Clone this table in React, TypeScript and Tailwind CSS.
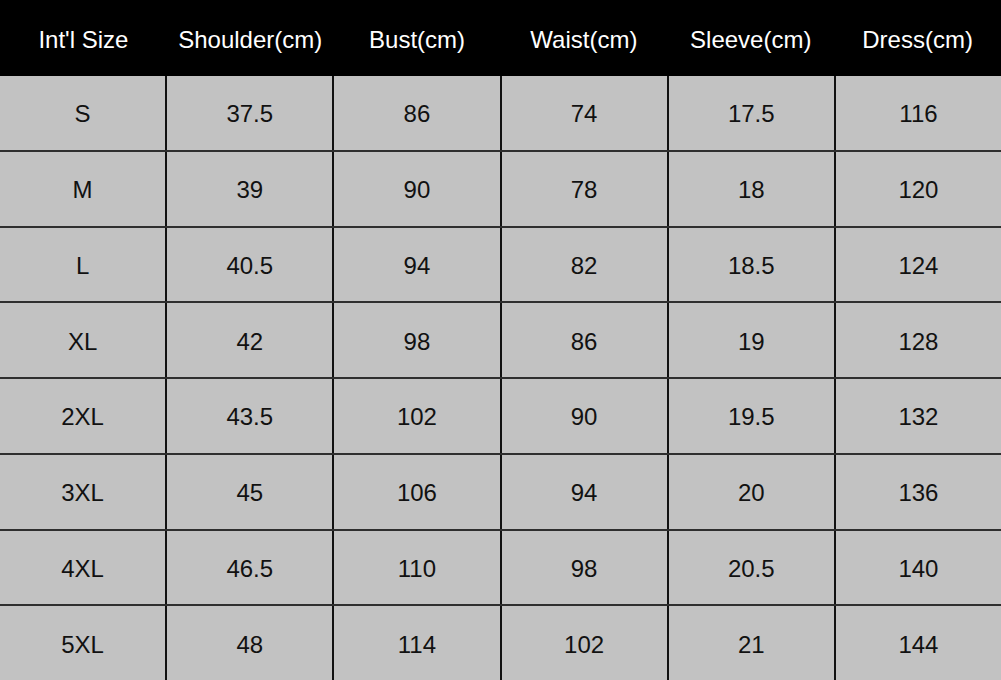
import React from "react";

const headers = ["Int'l Size", "Shoulder(cm)", "Bust(cm)", "Waist(cm)", "Sleeve(cm)", "Dress(cm)"];
const rows = [
  ["S", "37.5", "86", "74", "17.5", "116"],
  ["M", "39", "90", "78", "18", "120"],
  ["L", "40.5", "94", "82", "18.5", "124"],
  ["XL", "42", "98", "86", "19", "128"],
  ["2XL", "43.5", "102", "90", "19.5", "132"],
  ["3XL", "45", "106", "94", "20", "136"],
  ["4XL", "46.5", "110", "98", "20.5", "140"],
  ["5XL", "48", "114", "102", "21", "144"],
];

export default function App() {
  return (
    <div
      className="w-[1001px] h-[680px] flex flex-col bg-[#c2c2c2] overflow-hidden"
      style={{ fontFamily: '"Liberation Sans", Arial, sans-serif' }}
    >
      <div className="h-[76px] flex bg-black text-white text-[24px]">
        {headers.map((h) => (
          <div key={h} className="flex-1 flex items-center justify-center pt-[3px]">
            {h}
          </div>
        ))}
      </div>
      <div className="flex-1 flex flex-col">
        {rows.map((r, i) => (
          <div
            key={i}
            className={`flex-1 flex ${i > 0 ? "border-t-2 border-[#2e2e2e]" : ""}`}
          >
            {r.map((c, j) => (
              <div
                key={j}
                className={`flex-1 flex items-center justify-center pt-[3px] text-[24px] text-[#111] ${
                  j > 0 ? "border-l-2 border-[#111]" : ""
                }`}
              >
                {c}
              </div>
            ))}
          </div>
        ))}
      </div>
    </div>
  );
}
